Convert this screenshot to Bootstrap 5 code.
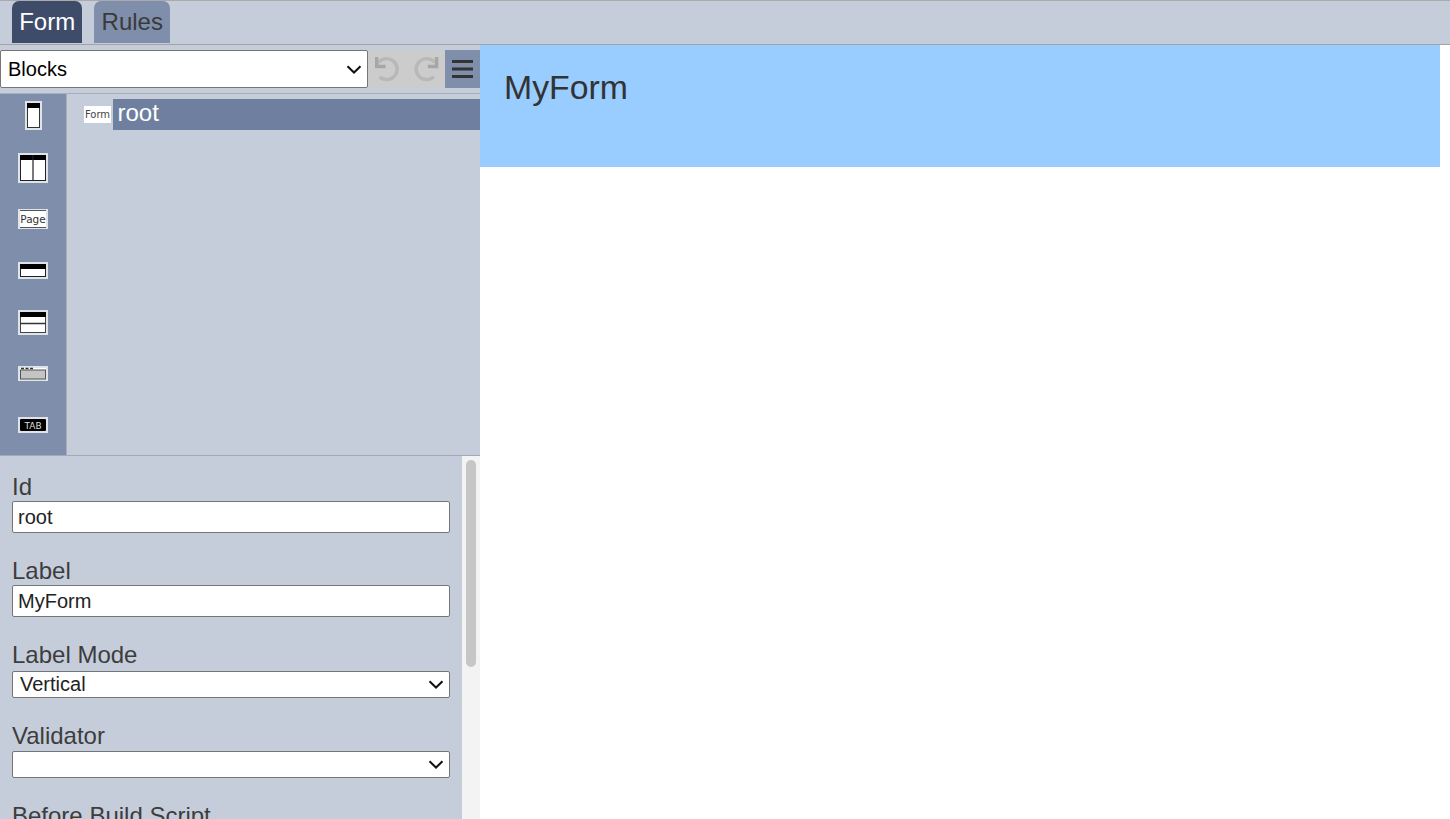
<!DOCTYPE html>
<html lang="en">
<head>
<meta charset="utf-8">
<title>Form designer</title>
<link rel="stylesheet" href="https://cdn.jsdelivr.net/npm/bootstrap@5.3.0/dist/css/bootstrap.min.css">
<style>
html,body{height:100%;overflow:hidden;background:#fff;font-family:"Liberation Sans",Arial,sans-serif;color:#333}
.app-shell{height:819px;width:1450px}
.top-strip{height:45px;background:#c5cddb;border-top:1px solid #aaa;border-bottom:1px solid #a3a3a3;padding-left:12px;gap:12px}
.tab-item{height:42px;padding:0 7.2px;font-size:24px;line-height:42px;border-radius:7px 7px 0 0;color:#3a3a3a;background:#7f8eaa}
.tab-item.is-on{background:#3e4b69;color:#fff}
.work-row{height:774px}
.left-pane{width:480px;flex:none;background:#c5cddb}
.tool-strip{height:49px;border-bottom:1px solid #aab0ba;padding-top:5px}
.chev-select{appearance:none;-webkit-appearance:none;font-family:inherit;font-size:20px;line-height:1;border:1px solid #767676;border-radius:2px;padding:0 26px 0 7px;background:#fff url("data:image/svg+xml,%3Csvg xmlns='http://www.w3.org/2000/svg' width='16' height='9' viewBox='0 0 16 9'%3E%3Cpath d='M1.500 1.200 8 7.500l6.500-6.300' fill='none' stroke='%23111' stroke-width='2'/%3E%3C/svg%3E") no-repeat right 5.500px center}
.block-select{width:368px;height:38px;color:#000}
.undo-wrap{width:77px;height:38px;background:#ccc}
.undo-btn{width:39px;height:38px}
.undo-btn+.undo-btn{width:38px}
.menu-btn{width:35px;height:38px;background:#7f8eaa}
.mid-zone{height:362px;border-bottom:1px solid #a3a9b5}
.palette{width:67px;flex:none;background:#7f8eaa;border-right:1px solid #a9aeb8;padding-top:7px;gap:21.67px}
.pal-icon{display:block;height:30px}
.tree-zone{padding:5px 0 0 17px}
.form-chip{width:27px;height:17px;margin:7px 2px 0 0;background:#fff;color:#444;font-family:"DejaVu Sans",sans-serif;font-size:10px;line-height:17px;text-align:center;flex:none;white-space:nowrap;overflow:hidden}
.tree-label{height:31px;line-height:28px;background:#6e7fa0;color:#fff;font-size:24px;padding-left:4.500px}
.prop-wrap{height:363px}
.prop-pane{width:462px;height:363px;overflow:hidden;padding:18px 0 0 12px}
.prop-rail{width:18px;background:#f3f3f3;padding:4px}
.prop-thumb{height:207px;background:#c6c6c6;border-radius:5px}
.prop-group{margin-bottom:25px}
.prop-label{display:block;font-size:24px;line-height:25px;height:27px;color:#3d3d3d;margin:0}
.prop-label.gap-two{height:29px}
.prop-label.gap-one{height:28px}
.prop-input{display:block;width:438px;height:32px;font-size:20px;padding:0 5px;color:#222;border:1px solid #767676;border-radius:2px;background:#fff;font-family:inherit;outline:0}
.prop-select{display:block;width:438px;height:27px;color:#222;padding-bottom:1px}
.prop-area{display:block;width:438px;height:120px;border:1px solid #767676;background:#fff;border-radius:2px}
.view-pane{flex:1 1 auto;background:#fff;padding-right:10px}
.form-head{height:122px;background:#9cf;padding:22px 24px;font-size:33.800px;line-height:40px;color:#333}
</style>
</head>
<body>
<div class="app-shell d-flex flex-column">
  <div class="top-strip d-flex align-items-start">
    <div class="tab-item is-on">Form</div>
    <div class="tab-item">Rules</div>
  </div>
  <div class="work-row d-flex">
    <div class="left-pane d-flex flex-column">
      <div class="tool-strip d-flex">
        <select class="block-select chev-select"><option>Blocks</option></select>
        <div class="undo-wrap d-flex">
          <div class="undo-btn d-flex align-items-center justify-content-center">
            <svg width="25" height="26" viewBox="0 0 25 26" fill="none"><path d="M3.500 6.500A10.500 10.500 0 1 1 4.500 20.800" stroke="#b8b8b8" stroke-width="3.400"/><path d="M1.700 1v9.500H10.500" stroke="#a6a6a6" stroke-width="3.400"/></svg>
          </div>
          <div class="undo-btn d-flex align-items-center justify-content-center">
            <svg width="25" height="26" viewBox="0 0 25 26" fill="none"><path d="M20.800 6.500A10.500 10.500 0 1 0 19.800 20.800" stroke="#b8b8b8" stroke-width="3.400"/><path d="M22.600 1v9.500H13.800" stroke="#a6a6a6" stroke-width="3.400"/></svg>
          </div>
        </div>
        <div class="menu-btn d-flex align-items-center justify-content-center">
          <svg width="21" height="18" viewBox="0 0 21 18" fill="#333"><rect width="21" height="3"/><rect y="7.500" width="21" height="3"/><rect y="15" width="21" height="3"/></svg>
        </div>
      </div>
      <div class="mid-zone d-flex">
        <div class="palette d-flex flex-column align-items-center">
          <svg class="pal-icon" width="17" height="30" viewBox="0 0 17 30"><rect x="1" y="1" width="15" height="27" fill="#fff" stroke="#dfe3ea" stroke-width="2"/><rect x="2.500" y="2.500" width="12" height="24" fill="#fff" stroke="#333"/><rect x="2" y="2" width="13" height="5"/></svg>
          <svg class="pal-icon" width="30" height="30" viewBox="0 0 30 30"><rect x="1" y="1" width="28" height="28" fill="#fff" stroke="#dfe3ea" stroke-width="2"/><rect x="2.500" y="2.500" width="25" height="25" fill="#fff" stroke="#222"/><rect x="2" y="2" width="26" height="5"/><rect x="14.400" y="2" width="1.200" height="26" fill="#222"/></svg>
          <svg class="pal-icon" width="30" height="30" viewBox="0 0 30 30"><rect x="1" y="6" width="28" height="18" fill="#fff" stroke="#dfe3ea" stroke-width="2"/><path d="M2 6.500h26M2 23.500h26" stroke="#555"/><text x="15" y="18.500" font-size="10.500" text-anchor="middle" fill="#333" font-family="DejaVu Sans">Page</text></svg>
          <svg class="pal-icon" width="30" height="30" viewBox="0 0 30 30"><rect x="1" y="7" width="28" height="15" fill="#fff" stroke="#dfe3ea" stroke-width="2"/><rect x="2.500" y="8.500" width="25" height="12" fill="#fff" stroke="#222"/><rect x="2" y="8" width="26" height="5"/></svg>
          <svg class="pal-icon" width="30" height="30" viewBox="0 0 30 30"><rect x="1" y="3" width="28" height="23" fill="#fff" stroke="#dfe3ea" stroke-width="2"/><rect x="2.500" y="4.500" width="25" height="20" fill="#fff" stroke="#444"/><rect x="2" y="4" width="26" height="5"/><path d="M2 15.500h26" stroke="#333" stroke-width="1.500"/></svg>
          <svg class="pal-icon" width="30" height="30" viewBox="0 0 30 30"><rect x="1" y="8" width="28" height="13" fill="#fff" stroke="#dfe3ea" stroke-width="2"/><rect x="2.500" y="11" width="25" height="9" fill="#c4c4c4" stroke="#555"/><path d="M3 9.500h3M7.500 9.500h3M12 9.500h3" stroke="#333" stroke-width="1.500"/></svg>
          <svg class="pal-icon" width="30" height="30" viewBox="0 0 30 30"><rect x="1" y="7" width="28" height="14" fill="#fff" stroke="#dfe3ea" stroke-width="2"/><rect x="2" y="8" width="26" height="12" rx="1"/><text x="15" y="17.500" font-size="9" text-anchor="middle" fill="#ddd" font-family="DejaVu Sans">TAB</text></svg>
        </div>
        <div class="tree-zone d-flex flex-grow-1">
          <div class="form-chip">Form</div>
          <div class="tree-label flex-grow-1">root</div>
        </div>
      </div>
      <div class="prop-wrap d-flex">
        <div class="prop-pane">
          <div class="prop-group"><label class="prop-label" for="f1">Id</label><input id="f1" class="prop-input" value="root"></div>
          <div class="prop-group"><label class="prop-label" for="f2">Label</label><input id="f2" class="prop-input" value="MyForm"></div>
          <div class="prop-group"><label class="prop-label gap-two" for="f3">Label Mode</label><select id="f3" class="prop-select chev-select"><option>Vertical</option></select></div>
          <div class="prop-group"><label class="prop-label gap-one" for="f4">Validator</label><select id="f4" class="prop-select chev-select"><option></option></select></div>
          <div class="prop-group"><label class="prop-label" for="f5">Before Build Script</label><div id="f5" class="prop-area"></div></div>
        </div>
        <div class="prop-rail"><div class="prop-thumb"></div></div>
      </div>
    </div>
    <div class="view-pane">
      <div class="form-head">MyForm</div>
    </div>
  </div>
</div>
<script src="https://cdn.jsdelivr.net/npm/bootstrap@5.3.0/dist/js/bootstrap.bundle.min.js"></script>
</body>
</html>
